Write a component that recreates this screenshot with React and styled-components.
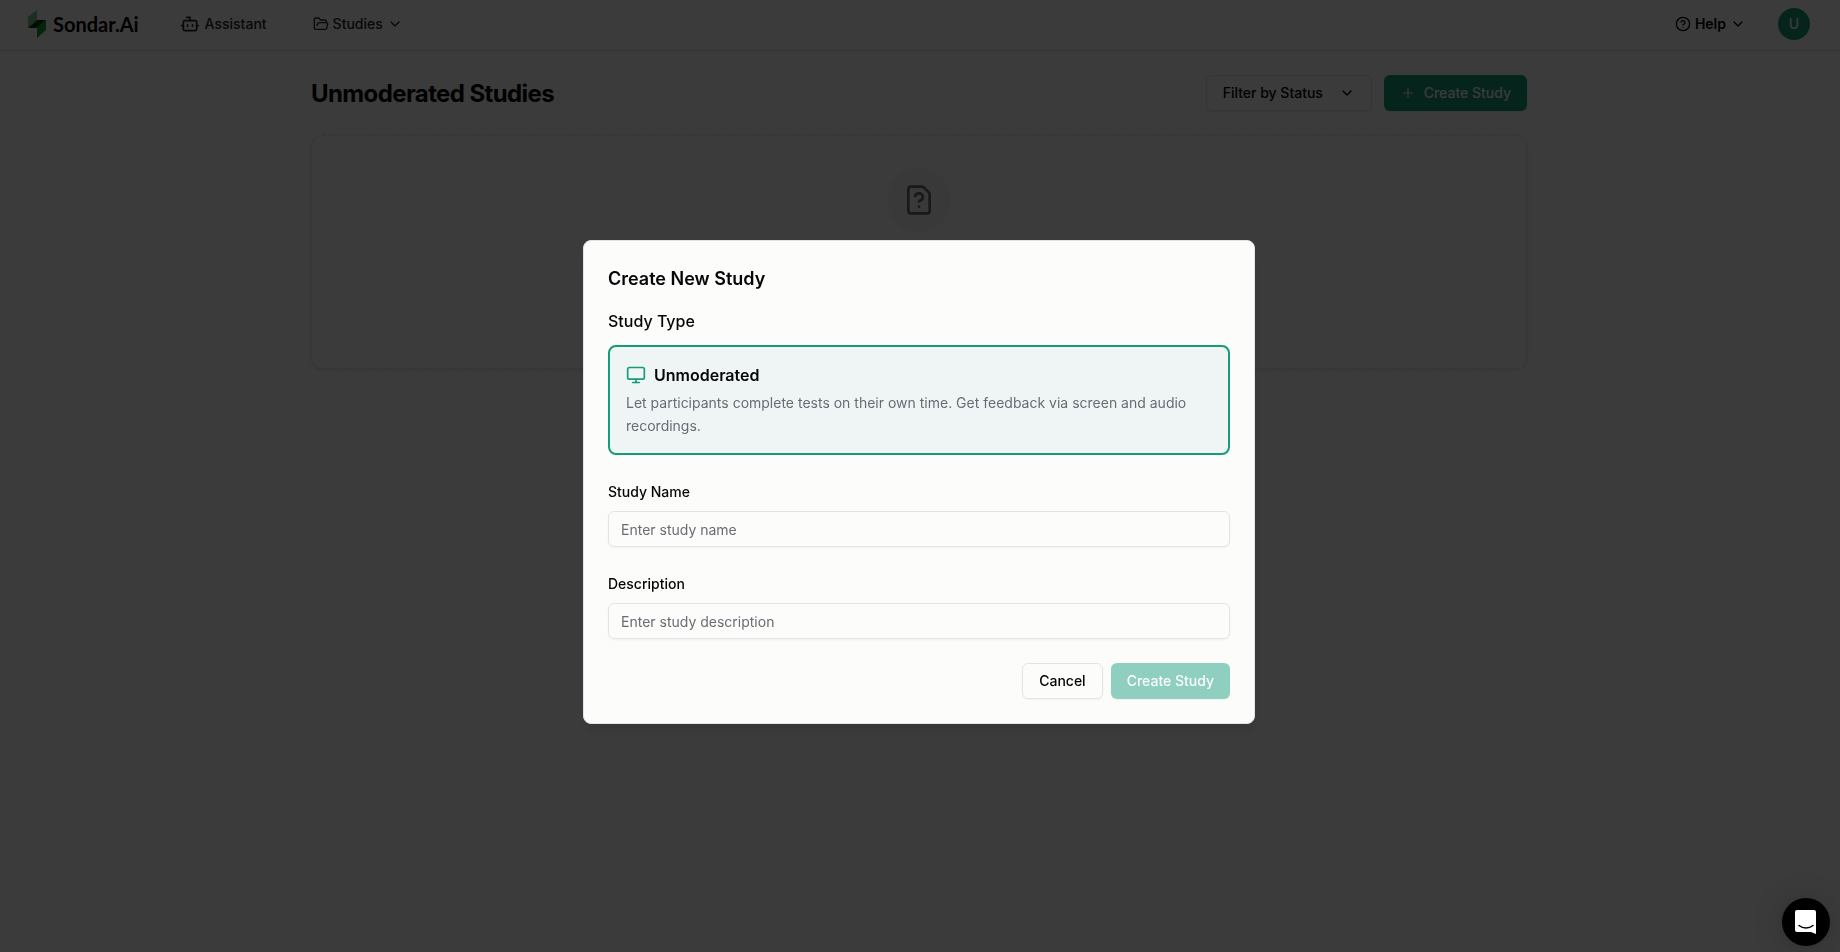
import React, { useState } from 'react'
import styled, { createGlobalStyle } from 'styled-components'
import {
  Bot,
  ChevronDown,
  CircleQuestionMark,
  FileQuestionMark,
  FolderOpen,
  Monitor,
  Plus,
} from 'lucide-react'

const theme = {
  page: '#fcfcfc',
  background: '#fcfcfa',
  text: '#050507',
  textSecondary: '#6b6b74',
  primary: '#169b7b',
  primaryTint: '#eff5f5',
  border: '#e4e4e7',
  muted: '#f4f4f5',
}

const STATUSES = ['Draft', 'Active', 'Completed']

const Logo = () => (
  <LogoLink href="#" aria-label="Sondar.Ai">
    <svg width="18" height="28" viewBox="0 0 18 28" aria-hidden="true">
      <path d="M9 0v10L0 18V7z" fill="#7cc48a" />
      <path d="M0 18 9 10h9l-9 8z" fill="#04400c" />
      <path d="M18 10v10l-9 8V18z" fill="#189a2f" />
    </svg>
    <span>Sondar.Ai</span>
  </LogoLink>
)

const Field = ({ id, label, ...rest }) => (
  <FieldGroup>
    <Label htmlFor={id}>{label}</Label>
    <Input id={id} type="text" {...rest} />
  </FieldGroup>
)

const CreateStudyDialog = () => {
  const [name, setName] = useState('')
  const [description, setDescription] = useState('')

  return (
    <Overlay>
      <Dialog role="dialog" aria-modal="true" aria-labelledby="dialog-title">
        <DialogTitle id="dialog-title">Create New Study</DialogTitle>
        <Section>
          <SectionTitle>Study Type</SectionTitle>
          <TypeCard type="button" aria-pressed="true">
            <TypeName>
              <Monitor size={20} color={theme.primary} />
              Unmoderated
            </TypeName>
            <TypeText>
              Let participants complete tests on their own time. Get feedback
              via screen and audio recordings.
            </TypeText>
          </TypeCard>
        </Section>
        <Fields>
          <Field
            id="study-name"
            label="Study Name"
            placeholder="Enter study name"
            value={name}
            onChange={e => setName(e.target.value)}
          />
          <Field
            id="study-description"
            label="Description"
            placeholder="Enter study description"
            value={description}
            onChange={e => setDescription(e.target.value)}
          />
        </Fields>
        <Actions>
          <Button type="button">Cancel</Button>
          <Button type="button" $primary disabled={!name}>
            Create Study
          </Button>
        </Actions>
      </Dialog>
    </Overlay>
  )
}

const App = () => (
  <>
    <GlobalStyle />
    <Header>
      <Logo />
      <Nav>
        <NavLink href="#">
          <Bot size={20} />
          Assistant
        </NavLink>
        <NavButton type="button">
          <FolderOpen size={16} />
          Studies
          <ChevronDown size={16} />
        </NavButton>
      </Nav>
      <Account>
        <NavButton type="button" $strong>
          <CircleQuestionMark size={16} />
          Help
          <ChevronDown size={16} />
        </NavButton>
        <Avatar type="button">U</Avatar>
      </Account>
    </Header>
    <Content>
      <Main>
        <TitleBar>
          <PageTitle>Unmoderated Studies</PageTitle>
          <Filter>
            <Select aria-label="Filter by Status" defaultValue="">
              <option value="">Filter by Status</option>
              {STATUSES.map(status => (
                <option key={status}>{status}</option>
              ))}
            </Select>
            <ChevronDown size={16} />
          </Filter>
          <Button type="button" $primary>
            <Plus size={16} strokeWidth={1.5} />
            Create Study
          </Button>
        </TitleBar>
        <EmptyCard>
          <EmptyIcon>
            <FileQuestionMark size={32} />
          </EmptyIcon>
        </EmptyCard>
      </Main>
    </Content>
    <CreateStudyDialog />
    <Launcher type="button" aria-label="Open chat">
      <svg width="24" height="26" viewBox="0 0 24 26" aria-hidden="true">
        <path
          d="M3 1h17a2 2 0 0 1 2 2v22l-5-2H3a2 2 0 0 1-2-2V3a2 2 0 0 1 2-2z"
          fill="#fff"
        />
        <path
          d="M5 16.500c4 3.300 10 3.300 14 0"
          fill="none"
          stroke="#000"
          strokeWidth="1.500"
          strokeLinecap="round"
        />
      </svg>
    </Launcher>
  </>
)

const GlobalStyle = createGlobalStyle`
  *, *::before, *::after {
    box-sizing: border-box;
  }
  body {
    margin: 0;
    background: ${theme.page};
    color: ${theme.text};
    font-family: Inter, 'Liberation Sans', sans-serif;
    font-size: 14px;
    line-height: 20px;
    -webkit-font-smoothing: antialiased;
  }
  button, input, select {
    font: inherit;
    color: inherit;
  }
  h1, h2, h3, p {
    margin: 0;
  }
  svg {
    flex-shrink: 0;
  }
`

const Header = styled.header`
  display: flex;
  align-items: center;
  padding: 8px 30px 10px 28px;
  border-bottom: 1px solid ${theme.border};
`

const LogoLink = styled.a`
  display: flex;
  align-items: center;
  gap: 7px;
  color: ${theme.text};
  font-family: Lato, sans-serif;
  font-size: 20px;
  font-weight: 700;
  text-decoration: none;
`

const Nav = styled.nav`
  display: flex;
  align-items: center;
  gap: 46px;
  margin-left: 41px;
`

const NavLink = styled.a`
  display: flex;
  align-items: center;
  gap: 5px;
  color: #27272a;
  font-weight: 500;
  text-decoration: none;
`

const NavButton = styled.button`
  display: flex;
  align-items: center;
  gap: 4px;
  padding: 0;
  border: 0;
  background: none;
  color: ${({ $strong }) => ($strong ? theme.text : '#27272a')};
  font-weight: ${({ $strong }) => ($strong ? 600 : 500)};
`

const Account = styled.div`
  display: flex;
  align-items: center;
  gap: 32px;
  margin-left: auto;
`

const Avatar = styled.button`
  width: 32px;
  height: 32px;
  padding: 0;
  border: 0;
  border-radius: 50%;
  background: ${theme.primary};
  color: ${theme.background};
  font-size: 14px;
  font-weight: 500;
`

const Content = styled.div`
  padding-right: 2px;
`

const Main = styled.main`
  max-width: 1280px;
  margin: 0 auto;
  padding: 24px 32px;
`

const TitleBar = styled.div`
  display: flex;
  align-items: center;
  gap: 12px;
`

const PageTitle = styled.h1`
  margin-right: auto;
  padding-top: 2px;
  font-size: 24px;
  font-weight: 700;
  line-height: 32px;
  letter-spacing: -0.025em;
`

const Filter = styled.div`
  display: grid;
  grid-template-columns: 1fr 16px;
  align-items: center;
  width: 166px;
  padding-right: 16px;
  border: 1px solid ${theme.border};
  border-radius: 6px;
  box-shadow: 0 1px 2px rgba(0, 0, 0, 0.05);
  & > svg {
    grid-area: 1 / 2;
    pointer-events: none;
  }
`

const Select = styled.select`
  grid-area: 1 / 1 / 2 / 3;
  height: 34px;
  padding: 0 0 0 16px;
  border: 0;
  background: none;
  font-weight: 500;
  appearance: none;
`

const Button = styled.button`
  display: inline-flex;
  align-items: center;
  justify-content: center;
  gap: 8px;
  height: 36px;
  padding: 0 16px;
  border: ${({ $primary }) => ($primary ? '0' : `1px solid ${theme.border}`)};
  border-radius: 6px;
  background: ${({ $primary }) => ($primary ? theme.primary : 'transparent')};
  box-shadow: 0 1px 2px rgba(0, 0, 0, 0.05);
  color: ${({ $primary }) => ($primary ? theme.background : theme.text)};
  font-weight: 500;
  white-space: nowrap;
  &:disabled {
    background: #8fcfc0;
  }
`

const EmptyCard = styled.section`
  display: flex;
  flex-direction: column;
  align-items: center;
  min-height: 234px;
  margin-top: 24px;
  padding: 32px;
  border: 1px dashed ${theme.border};
  border-radius: 12px;
  box-shadow: 0 1px 3px rgba(0, 0, 0, 0.1);
`

const EmptyIcon = styled.div`
  display: flex;
  align-items: center;
  justify-content: center;
  width: 64px;
  height: 64px;
  border-radius: 50%;
  background: ${theme.muted};
  color: ${theme.textSecondary};
`

const Overlay = styled.div`
  position: fixed;
  inset: 0;
  display: flex;
  align-items: center;
  justify-content: center;
  padding: 28px 18px 16px 16px;
  background: rgba(0, 0, 0, 0.77);
`

const Dialog = styled.div`
  width: 100%;
  max-width: 672px;
  padding: 24px;
  border: 1px solid ${theme.border};
  border-radius: 8px;
  background: ${theme.background};
  box-shadow: 0 10px 15px -3px rgba(0, 0, 0, 0.1);
`

const DialogTitle = styled.h2`
  font-size: 18px;
  font-weight: 600;
  line-height: 28px;
`

const Section = styled.section`
  margin-top: 16px;
`

const SectionTitle = styled.h3`
  font-size: 16px;
  font-weight: 500;
  line-height: 24px;
`

const TypeCard = styled.button`
  display: block;
  width: 100%;
  margin-top: 12px;
  padding: 16px;
  border: 2px solid ${theme.primary};
  border-radius: 8px;
  background: ${theme.primaryTint};
  text-align: left;
`

const TypeName = styled.span`
  display: flex;
  align-items: center;
  gap: 8px;
  font-size: 16px;
  font-weight: 600;
  line-height: 24px;
`

const TypeText = styled.span`
  display: block;
  margin-top: 4px;
  color: ${theme.textSecondary};
  line-height: 23px;
`

const Fields = styled.div`
  display: grid;
  gap: 26px;
  margin-top: 26px;
`

const FieldGroup = styled.div`
  display: grid;
  gap: 8px;
`

const Label = styled.label`
  font-weight: 500;
  line-height: 22px;
`

const Input = styled.input`
  width: 100%;
  height: 36px;
  padding: 0 12px;
  border: 1px solid ${theme.border};
  border-radius: 6px;
  background: transparent;
  box-shadow: 0 1px 2px rgba(0, 0, 0, 0.05);
  &::placeholder {
    color: ${theme.textSecondary};
  }
`

const Actions = styled.div`
  display: flex;
  justify-content: flex-end;
  gap: 8px;
  margin-top: 24px;
`

const Launcher = styled.button`
  position: fixed;
  right: 10px;
  bottom: 6px;
  display: flex;
  align-items: center;
  justify-content: center;
  width: 48px;
  height: 48px;
  padding: 0;
  border: 0;
  border-radius: 50%;
  background: #000;
  box-shadow: 0 1px 6px rgba(0, 0, 0, 0.1), 0 2px 32px rgba(0, 0, 0, 0.16);
`

export default App
